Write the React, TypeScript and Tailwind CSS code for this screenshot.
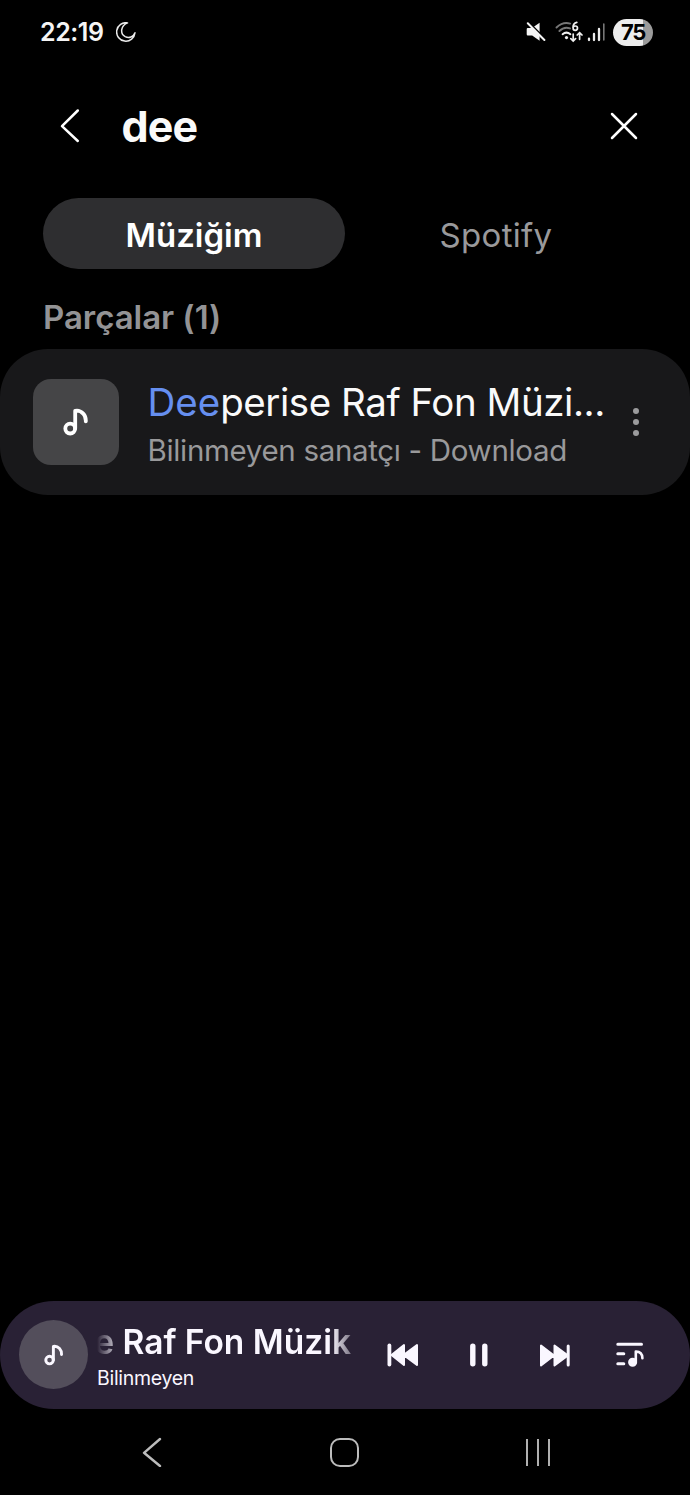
import { useState } from 'react'

type Tab = 'music' | 'spotify'

const tabs: { id: Tab, label: string, tracking: string }[] = [
  { id: 'music', label: 'Müziğim', tracking: 'tracking-[0px]' },
  { id: 'spotify', label: 'Spotify', tracking: 'tracking-[0.3px]' },
]

function NoteIcon({ className }: { className?: string }) {
  return (
    <svg viewBox="0 0 26 28" fill="none" stroke="currentColor" strokeWidth="3.8" strokeLinecap="round" strokeLinejoin="round" className={className}>
      <circle cx="7.2" cy="20.6" r="4.9" />
      <path d="M12.2 20.5V2.8C15 2.2 18 3.3 20.2 5.6C22 7.6 23 10 22.8 13.4" />
    </svg>
  )
}

function StatusBar() {
  return (
    <div className="flex h-16 shrink-0 items-center justify-between pl-[40px] pr-[37px]">
      <div className="flex items-center gap-[12px]">
        <span className="w-[64px] whitespace-nowrap text-[25px] font-semibold leading-8 tracking-[-0.45px] text-[#f5f5f5]">22:19</span>
        <svg viewBox="0 0 20 20" className="h-5 w-5" fill="none" stroke="#ececec" strokeWidth="1.5" strokeLinejoin="round">
          <path d="M11.6.9A9.2 9.2 0 1 0 19 10.8C17.4 15 13 16.6 9.2 14.6C3.8 11.6 4.6 3.6 11.6.9Z" />
        </svg>
      </div>

      <div className="flex items-center">
        <svg viewBox="0 0 20 20" className="h-5 w-5" fill="#f5f5f5">
          <path d="M1.8 6H6L13.6.7V18.8L6.2 13.4H1.8Q.7 13.4.7 12.2V7.2Q.7 6 1.8 6Z" />
          <path d="M1.6 -.6L20.6 18.3" stroke="#000" strokeWidth="2" />
          <path d="M1.8 1.3L18.4 18" stroke="#f5f5f5" strokeWidth="2" strokeLinecap="round" />
        </svg>
        <svg viewBox="0 0 28 22" className="ml-[8.5px] h-[22px] w-7" fill="none" strokeLinecap="round">
          <path d="M1.5 6.5Q7.8.5 15.2 2.6" stroke="#777" strokeWidth="1.9" />
          <path d="M4.4 10Q9.2 5.2 15 7.4" stroke="#777" strokeWidth="1.9" />
          <path d="M7.6 13.2Q11.4 10 15.4 13.2" stroke="#f0f0f0" strokeWidth="2" />
          <circle cx="11.5" cy="16.6" r="1.6" fill="#f0f0f0" />
          <path d="M21.8 1.4Q18 2.4 18 6.4Q18 9.4 20.3 9.4Q22.5 9.4 22.5 7.1Q22.5 5 20.3 5Q18.6 5 18 6.6" stroke="#f0f0f0" strokeWidth="1.7" />
          <path d="M18.2 13V19.8M15.8 17.6L18.2 20L20.6 17.6M24.6 18.3V12M22.2 14L24.6 11.6L27 14" stroke="#f0f0f0" strokeWidth="1.7" />
        </svg>
        <svg viewBox="0 0 18 20" className="ml-[4.5px] h-5 w-[18px]" fill="none" strokeWidth="2.3" strokeLinecap="round">
          <path d="M2 16.6V18M7 11.9V18M12 7V18" stroke="#ededed" />
          <path d="M16.8 2V18" stroke="#777" strokeWidth="1.6" />
        </svg>
        <div className="ml-[8px] flex h-[27px] w-[40px] items-center justify-center rounded-full bg-linear-to-r from-[#ededed] from-75% to-[#9b9b9b] to-75%">
          <span className="text-[22px] font-bold leading-6 tracking-[-1.2px] text-black">75</span>
        </div>
      </div>
    </div>
  )
}

function SearchHeader() {
  return (
    <header className="flex h-[124px] shrink-0 items-center pl-[60px] pr-[52px]">
      <button aria-label="Geri">
        <svg viewBox="0 0 20 36" className="h-9 w-5" fill="none" stroke="#fff" strokeWidth="2.5" strokeLinecap="round" strokeLinejoin="round">
          <path d="M17.8 2.5L2 18.2L17.8 33" />
        </svg>
      </button>
      <h1 className="ml-[41.5px] flex-1 text-[43px] font-bold leading-[52px] tracking-[-0.9px] text-[#fafafa]">dee</h1>
      <button aria-label="Temizle">
        <svg viewBox="0 0 28 28" className="h-7 w-7" fill="none" stroke="#fff" strokeWidth="2.5" strokeLinecap="round">
          <path d="M2 2L26 26M26 2L2 26" />
        </svg>
      </button>
    </header>
  )
}

function TrackCard() {
  return (
    <div className="flex h-[146px] shrink-0 items-center rounded-[48px] bg-[#18181a] pl-[33px] pr-[51.5px]">
      <div className="flex h-[86px] w-[86px] shrink-0 items-center justify-center rounded-[18px] bg-[#454547]">
        <NoteIcon className="h-[28px] w-[26px] text-white" />
      </div>
      <div className="ml-[28.5px] w-[470px] whitespace-nowrap pt-[8px]">
        <p className="text-[38.5px] leading-[48px] tracking-[-0.45px] text-[#fafafa]">
          <span className="tracking-[0px] text-[#668ff0]">Dee</span>perise Raf Fon Müzi...
        </p>
        <p className="text-[29.5px] leading-[48px] tracking-[-0.33px] text-[#99999b]">Bilinmeyen sanatçı - Download</p>
      </div>
      <button aria-label="Diğer" className="ml-auto flex flex-col gap-[5.5px]">
        <span className="h-[5.5px] w-[5.5px] rounded-full bg-[#9b9b9d]" />
        <span className="h-[5.5px] w-[5.5px] rounded-full bg-[#9b9b9d]" />
        <span className="h-[5.5px] w-[5.5px] rounded-full bg-[#9b9b9d]" />
      </button>
    </div>
  )
}

function MiniPlayer() {
  return (
    <div className="flex h-[108.5px] shrink-0 items-center rounded-full bg-[#292135] pl-[19px] pr-[46px] text-[#faf7ff]">
      <div className="flex h-[69px] w-[69px] shrink-0 items-center justify-center rounded-full bg-[#534e5b]">
        <NoteIcon className="h-[22px] w-[20px]" />
      </div>
      <div className="ml-[5px] w-[262px] pt-[4px]">
        <div className="flex justify-end overflow-hidden pr-[4px] mask-[linear-gradient(to_right,transparent_4px,black_28px,black_238px,rgba(0,0,0,0.4)_258px)]">
          <span className="whitespace-nowrap text-[33.5px] font-semibold leading-[42px] tracking-[0px]">e Raf Fon Müzik</span>
        </div>
        <p className="pl-[4px] text-[19.5px] leading-[30px] tracking-[-0.3px]">Bilinmeyen</p>
      </div>
      <div className="ml-auto flex items-center">
        <svg viewBox="0 0 32 24" className="h-6 w-8" fill="currentColor" stroke="currentColor" strokeWidth="2" strokeLinejoin="round">
          <path d="M17 2V22L4.5 12ZM30 2V22L16.5 12Z" />
          <path d="M2.4 2.5V21.5" strokeWidth="3.8" strokeLinecap="round" />
        </svg>
        <svg viewBox="0 0 18 24" className="ml-[51px] h-6 w-[18px]" stroke="currentColor" strokeWidth="5.4" strokeLinecap="round">
          <path d="M2.8 3.2V20.8M14.8 3.2V20.8" />
        </svg>
        <svg viewBox="0 0 32 24" className="ml-[50.5px] h-6 w-8" fill="currentColor" stroke="currentColor" strokeWidth="2" strokeLinejoin="round">
          <path d="M2 2.5V22.5L15 12.5ZM15.5 2.5V22.5L29 12.5Z" />
          <path d="M29.2 3V22" strokeWidth="3" strokeLinecap="round" />
        </svg>
        <svg viewBox="0 0 28 26" className="ml-[45.5px] h-[26px] w-7" fill="none" stroke="currentColor" strokeWidth="3" strokeLinecap="round" strokeLinejoin="round">
          <path d="M1.8 2.2H25.5M1.8 11.8H7.8M1.8 21.8H7.8" />
          <circle cx="16.6" cy="20.3" r="3" fill="currentColor" />
          <path d="M19.8 20.5V9.6C24 9.4 26.5 12 26.4 16.2" strokeWidth="2.6" />
        </svg>
      </div>
    </div>
  )
}

function NavBar() {
  return (
    <nav className="flex h-[86px] shrink-0 items-center pl-[142px] pr-[140px] text-[#bcbcbc]">
      <svg viewBox="0 0 20 30" className="h-[30px] w-5" fill="none" stroke="currentColor" strokeWidth="2.4" strokeLinecap="round" strokeLinejoin="round">
        <path d="M18 2L2 15.8L18 29" />
      </svg>
      <div className="ml-[168px] h-[29px] w-[29px] rounded-[10px] border-[2.5px] border-[#bcbcbc]" />
      <div className="ml-auto flex gap-[9px]">
        <span className="h-[27px] w-[2px] bg-[#b0b0b0]" />
        <span className="h-[27px] w-[2px] bg-[#b0b0b0]" />
        <span className="h-[27px] w-[2px] bg-[#b0b0b0]" />
      </div>
    </nav>
  )
}

export default function App() {
  const [active, setActive] = useState<Tab>('music')

  return (
    <div className="flex h-[1495px] w-[690px] flex-col overflow-hidden bg-black font-['Inter',sans-serif]">
      <StatusBar />
      <SearchHeader />

      <div className="mt-[9.5px] flex h-[71.5px] shrink-0 px-[43px]">
        {tabs.map(tab => (
          <button
            key={tab.id}
            onClick={() => setActive(tab.id)}
            className={`w-[302px] rounded-full pt-[3px] text-[33px] leading-10 ${tab.tracking} ${active === tab.id ? 'bg-[#2e2e30] font-semibold text-white' : 'text-[#99999b]'}`}
          >
            {tab.label}
          </button>
        ))}
      </div>

      <h2 className="flex h-20 shrink-0 items-center pb-[16px] pt-[32px] pl-[43px] text-[33px] font-semibold leading-8 tracking-[-0.05px] text-[#939395]">Parçalar (1)</h2>
      <TrackCard />

      <div className="flex-1" />

      <MiniPlayer />
      <NavBar />
    </div>
  )
}
